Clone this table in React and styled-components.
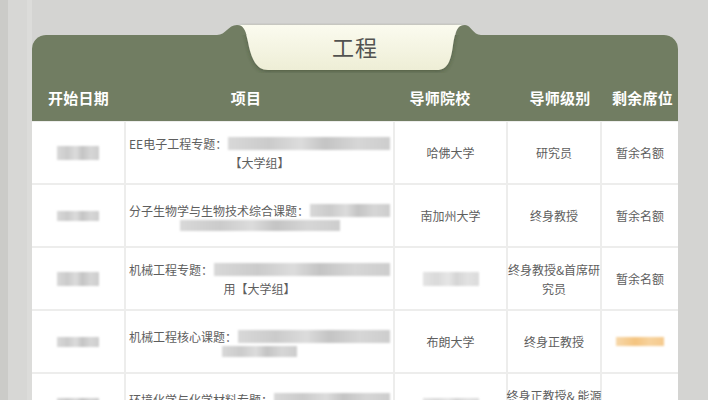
import React from "react";
import styled, { createGlobalStyle } from "styled-components";

const GlobalStyle = createGlobalStyle`
  body {
    margin: 0;
    background: linear-gradient(to right, #cbcbc8 0 8px, #d7d7d5 8px 27px, #dcdcda 27px 32px, #d4d4d2 32px);
    font-family: "Noto Sans CJK SC", "Noto Sans", sans-serif;
  }
`;

const StyledPage = styled.div`
  padding: 35px 0 0 32px;
  height: 365px;
  overflow: hidden;
`;

const StyledCard = styled.section`
  position: relative;
  width: 646px;
  background: #fff;
  border-radius: 14px 14px 0 0;
`;

const StyledTabArt = styled.svg`
  position: absolute;
  left: 180px;
  top: -12px;
  width: 280px;
  height: 50px;
  z-index: 1;
`;

const StyledTitle = styled.h1`
  position: absolute;
  top: -4px;
  left: 0;
  right: 0;
  margin: 0;
  text-align: center;
  font-size: 22px;
  line-height: 30px;
  font-weight: 400;
  color: #525250;
  letter-spacing: 1px;
  z-index: 2;
`;

const StyledHeader = styled.div`
  display: grid;
  grid-template-columns: 93px 242px 146px 94px 71px;
  align-items: end;
  height: 86px;
  padding-bottom: 12px;
  box-sizing: border-box;
  background: #717d62;
  border-radius: 14px 14px 0 0;
`;

const StyledHeadCell = styled.div`
  text-align: center;
  color: #fff;
  font-size: 15px;
  font-weight: 700;
  line-height: 22px;
  letter-spacing: 0.3px;
`;

const StyledBody = styled.div`
  display: grid;
  grid-template-columns: 92px 267px 111px 92px 76px;
  grid-auto-rows: 61px;
  gap: 2px;
  padding-top: 1px;
  background: #ededec;
`;

const StyledCell = styled.div`
  display: flex;
  flex-direction: column;
  align-items: center;
  justify-content: center;
  padding: 0 3px;
  background: #fff;
  color: #5e5e5e;
  font-size: 12px;
  line-height: 19px;
  text-align: center;
`;

const StyledLine = styled.div`
  display: flex;
  align-items: center;
  gap: ${({ $gap }) => $gap || 0}px;
  white-space: nowrap;
  align-self: ${({ $stretch }) => ($stretch ? "stretch" : "center")};
  justify-content: ${({ $stretch }) => ($stretch ? "flex-start" : "center")};
`;

const StyledBlur = styled.span`
  display: inline-block;
  width: ${({ $w }) => $w}px;
  height: ${({ $h }) => $h || 12}px;
  background: ${({ $c }) =>
    $c === "orange"
      ? "linear-gradient(to right, #f7d8aa, #f4c480 40%, #f7d29c 70%, #f5ca8e)"
      : "linear-gradient(to right, #d8d8d8, #cbcbcb 25%, #dcdcdc 45%, #c4c4c4 60%, #d6d6d6 80%, #cdcdcd)"};
  filter: blur(1.3px);
  opacity: ${({ $c }) => ($c === "light" ? 0.7 : 1)};
`;

const rows = [
  {
    lines: [
      { text: "EE电子工程专题：", blur: 166 },
      { text: "【大学组】" },
    ],
    school: "哈佛大学",
    level: ["研究员"],
    seats: "暂余名额",
  },
  {
    lines: [
      { text: "分子生物学与生物技术综合课题：", blur: 92 },
      { blur: 160 },
    ],
    school: "南加州大学",
    level: ["终身教授"],
    seats: "暂余名额",
  },
  {
    lines: [
      { text: "机械工程专题：", blur: 180 },
      { text: "用【大学组】" },
    ],
    level: ["终身教授&首席研", "究员"],
    seats: "暂余名额",
  },
  {
    lines: [
      { text: "机械工程核心课题：", blur: 160 },
      { blur: 75 },
    ],
    school: "布朗大学",
    level: ["终身正教授"],
    seatsBlur: true,
  },
  {
    lines: [
      { text: "环境化学与化学材料专题：", blur: 126 },
      { blur: 120 },
    ],
    level: ["终身正教授& 能源", "研究员"],
  },
];

const headings = ["开始日期", "项目", "导师院校", "导师级别", "剩余席位"];

const TabArt = () => (
  <StyledTabArt viewBox="212 23 280 50">
    <defs>
      <linearGradient id="tabFill" x1="0" y1="0" x2="0" y2="1">
        <stop offset="0" stopColor="#fbfbef" />
        <stop offset="1" stopColor="#eeeed6" />
      </linearGradient>
      <filter id="tabShadow" x="-10%" y="-20%" width="120%" height="160%">
        <feDropShadow dx="0" dy="1.5" stdDeviation="2" floodColor="#2f3826" floodOpacity="0.45" />
      </filter>
    </defs>
    <path
      d="M237 25 L465 25 C457 25 455 32 453 45 C451 60 448 70 437 70 L268 70 C256 70 251 58 248 42 C246 32 244 25 237 25 Z"
      fill="url(#tabFill)"
      filter="url(#tabShadow)"
    />
    <path d="M217 35 C226 35 228 25 237 25 C243 25 245 30 246.5 35 Z" fill="#717d62" />
    <path d="M465 25 C471 25 473 35 481 35 L455.6 35 C456.6 29 459 25 465 25 Z" fill="#717d62" />
  </StyledTabArt>
);

const App = () => {
  return (
    <StyledPage>
      <GlobalStyle />
      <StyledCard>
        <TabArt />
        <StyledTitle>工程</StyledTitle>
        <StyledHeader>
          {headings.map((h) => (
            <StyledHeadCell key={h}>{h}</StyledHeadCell>
          ))}
        </StyledHeader>
        <StyledBody>
          {rows.map((row, i) => (
            <React.Fragment key={i}>
              <StyledCell>
                <StyledBlur $w={42} $h={i % 2 ? 10 : 14} />
              </StyledCell>
              <StyledCell>
                {row.lines.map((line, j) => (
                  <StyledLine key={j} $gap={1} $stretch={j === 0}>
                    {line.text && <span>{line.text}</span>}
                    {line.blur && <StyledBlur $w={line.blur} $h={j === 0 ? 13 : 11} />}
                  </StyledLine>
                ))}
              </StyledCell>
              <StyledCell>
                {row.school ? row.school : <StyledBlur $w={56} $h={14} $c="light" />}
              </StyledCell>
              <StyledCell>
                {row.level.map((l) => (
                  <StyledLine key={l}>{l}</StyledLine>
                ))}
              </StyledCell>
              <StyledCell>
                {row.seats}
                {row.seatsBlur && <StyledBlur $w={48} $h={9} $c="orange" />}
              </StyledCell>
            </React.Fragment>
          ))}
        </StyledBody>
      </StyledCard>
    </StyledPage>
  );
};

export default App;
